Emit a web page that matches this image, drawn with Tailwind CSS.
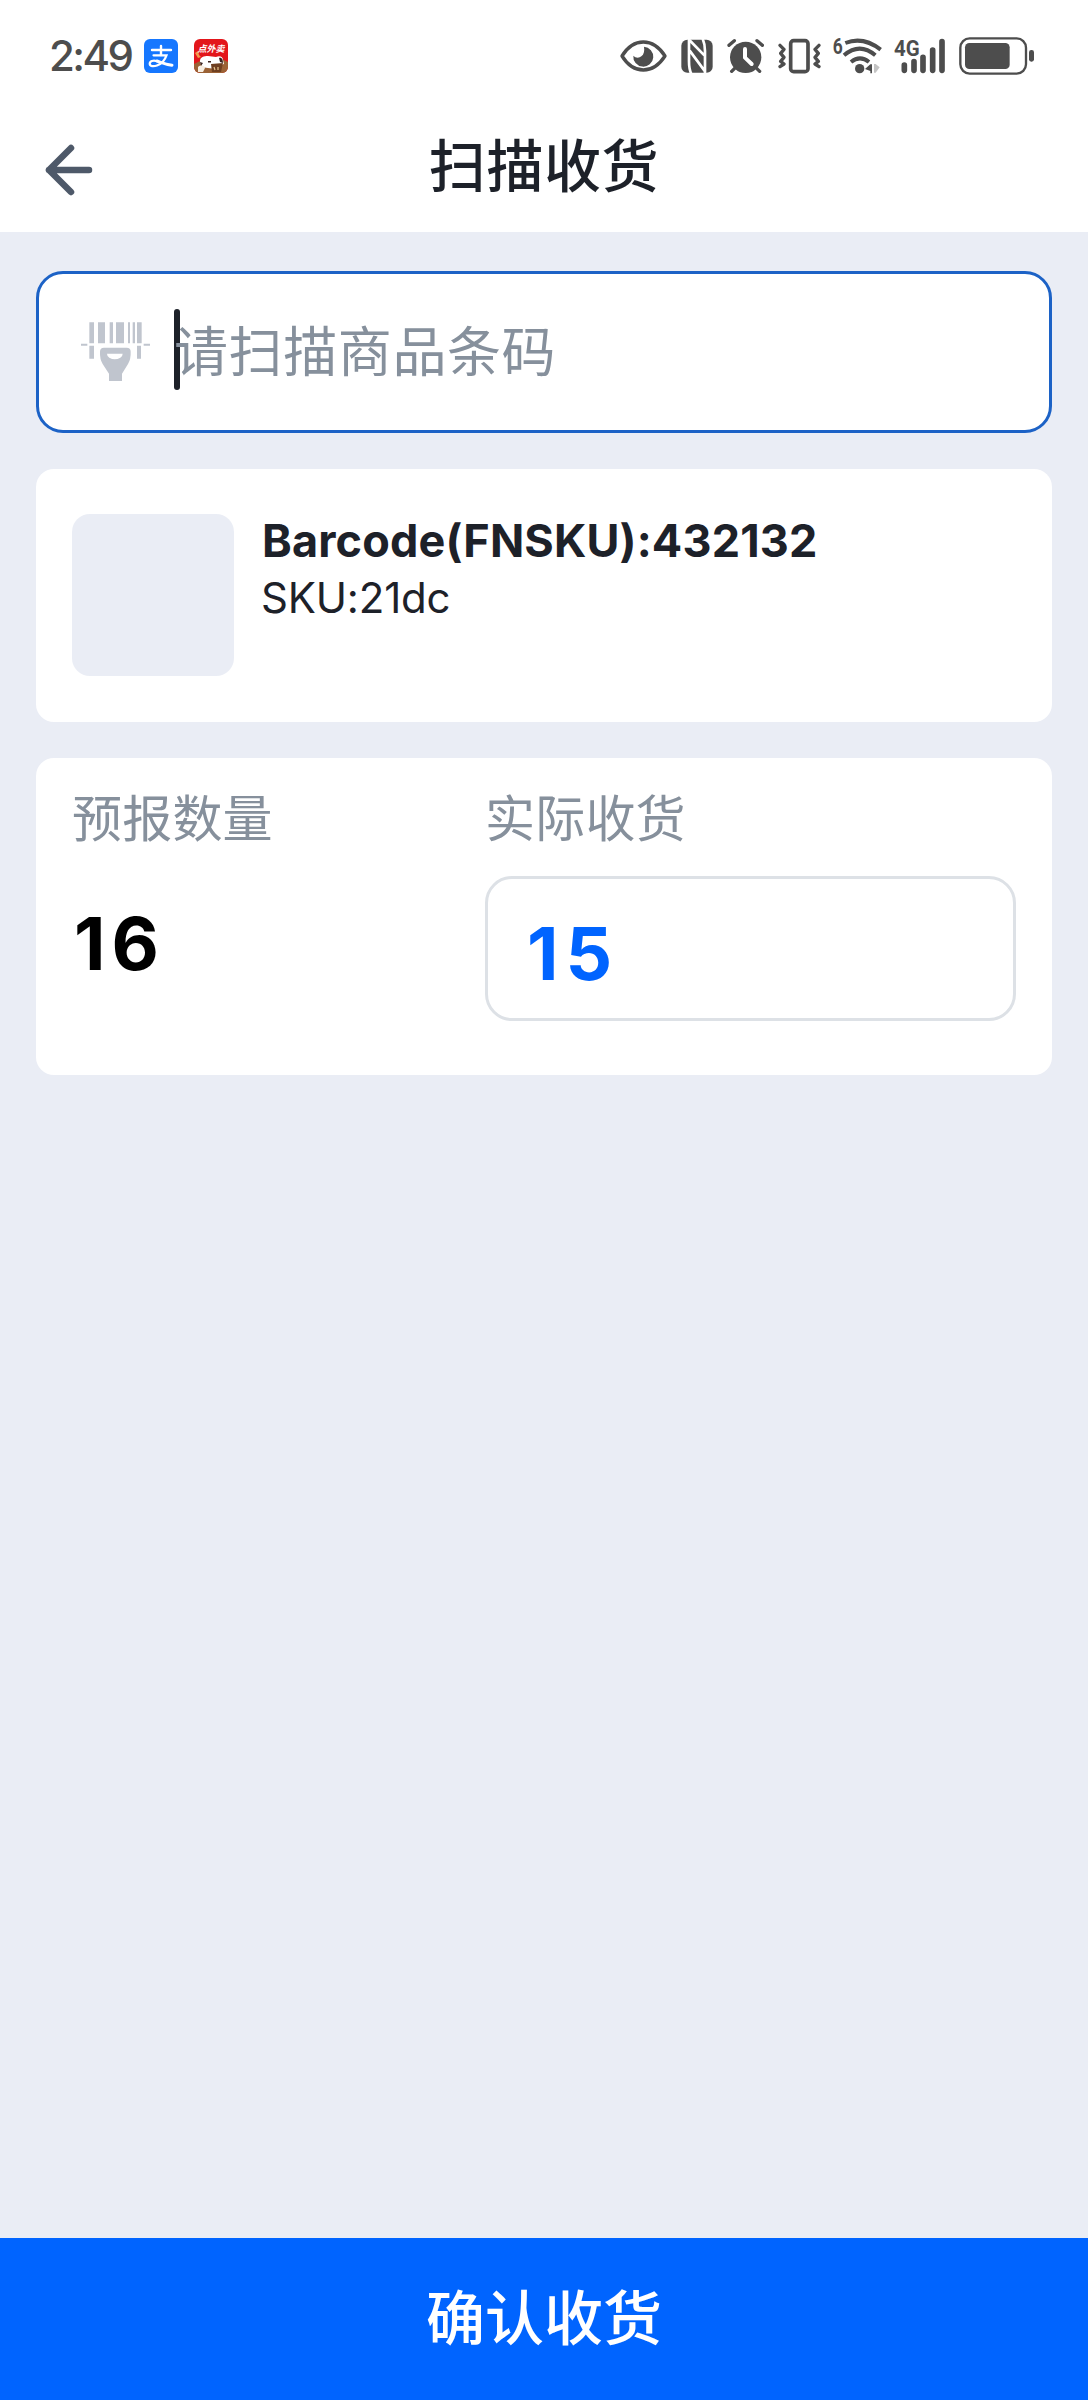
<!DOCTYPE html>
<html lang="zh-CN">
<head>
  <meta charset="UTF-8">
  <meta name="viewport" content="width=device-width, initial-scale=1.0">
  <title>扫描收货</title>
  <script src="https://cdn.jsdelivr.net/npm/@tailwindcss/browser@4"></script>
</head>
<body class="bg-[#eaedf5] text-[#1d2129] font-['Noto_Sans_CJK_SC',sans-serif]">
  <div class="flex flex-col w-[1088px] h-[2400px]">
    <header class="bg-white h-[232px] shrink-0">
      <!-- status bar -->
      <div class="flex justify-between h-[92px] pt-9 pl-[49px] pr-[54px] text-[#4d4d4d]">
        <div class="flex items-center h-10">
          <span class="w-[95px] font-['Inter',sans-serif] font-medium text-[42px] leading-10 tracking-[-2.6px]">2:49</span>
          <svg class="w-[34px] h-[34px]" viewBox="0 0 34 34">
            <rect width="34" height="34" rx="6" fill="#1677ff"/>
            <g fill="none" stroke="#fff" stroke-linecap="round">
              <path d="M8 11h19M17 7v9" stroke-width="2.4"/>
              <path d="M9.500 16.300h13c-1.600 4.700-5 8.500-9.500 10.200-3.400 1.200-7.300 1-7.300-1.800 0-2.700 3.500-3.700 7.200-2.600" stroke-width="2.200"/>
              <path d="M13 22c4 1.300 8 3.400 15 4.200" stroke-width="3"/>
            </g>
          </svg>
          <svg class="w-[34px] h-[34px] ml-4" viewBox="0 0 34 34">
            <defs><clipPath id="app"><rect width="34" height="34" rx="6"/></clipPath></defs>
            <g clip-path="url(#app)">
              <rect width="34" height="34" fill="#e3161b"/>
              <path d="M0 25l6-3 22-2 6 3v11H0z" fill="#9b6235"/>
              <path d="M1 14l3-2 1 4 2 2-3 1z" fill="#f19a4a"/>
              <path d="M6 22c0-4 4-5 8-5l8 1c4-2 7 0 7 3l1 4-3 1-5 4-8-1c-5 0-8-3-8-7z" fill="#fff"/>
              <path d="M25 19c3-1 4 2 4 5l-3-1zM6 23l3 1-2 3zM14 22l3 0v1.500h-3z" fill="#3b2420"/>
              <path d="M17 25l12-1-2 9h-9z" fill="#6f3f20"/>
              <path d="M4 28c3-3 7-1 7 1l-2 4H4z" fill="#f7eee2"/>
              <path d="M20 28l1 3M24 28v3" stroke="#e7c48c" stroke-width="1.200"/>
            </g>
            <text x="17" y="13" text-anchor="middle" font-size="9" font-weight="700" font-style="italic" fill="#fff">点外卖</text>
          </svg>
        </div>
        <div class="flex h-10">
          <!-- eye -->
          <svg class="w-[47px] h-10" viewBox="60 48 141 120">
            <path d="M66 108Q92 66 130 66T195 108Q168 150 130 150T66 108Z" fill="none" stroke="currentColor" stroke-width="10" stroke-linejoin="round"/>
            <path d="M132 80a30 30 0 1 1-32 27c6 7 17 8 24 2 8-6 10-17 8-29z" fill="currentColor"/>
          </svg>
          <!-- nfc -->
          <svg class="w-8 h-10 ml-3.5" viewBox="243 48 96 120">
            <rect x="244" y="59" width="94" height="99" rx="18" fill="currentColor"/>
            <path d="M267 56V124Q267 148 274 162M268 60L313 106M269 92L315 154M315 161V93Q315 72 308 56" fill="none" stroke="#fff" stroke-width="8"/>
          </svg>
          <!-- alarm -->
          <svg class="w-[37px] h-10 ml-3.5" viewBox="381 48 111 120">
            <circle cx="437" cy="112" r="47" fill="currentColor"/>
            <path d="M387 76l16-14M487 76l-16-14M404 145l-9 9M470 145l9 9" stroke="currentColor" stroke-width="10" stroke-linecap="round"/>
            <path d="M435 87v26l20 19" fill="none" stroke="#fff" stroke-width="12" stroke-linecap="round" stroke-linejoin="round"/>
          </svg>
          <!-- vibrate -->
          <svg class="w-[43px] h-10 ml-3.5" viewBox="534 48 129 120">
            <rect x="572" y="62" width="52" height="93" rx="9" fill="none" stroke="currentColor" stroke-width="11"/>
            <path d="M540 76l12 12-10 12 10 12-10 12 10 8-12 8M657 76l-12 12 10 12-10 12 10 12-10 8 12 8" fill="none" stroke="currentColor" stroke-width="10" stroke-linecap="round" stroke-linejoin="round"/>
          </svg>
          <!-- wifi -->
          <svg class="w-[50px] h-10 ml-[11px] overflow-visible" viewBox="36 48 150 120">
            <text x="38" y="101" font-family="Roboto" font-size="66" font-weight="700" textLength="30" lengthAdjust="spacingAndGlyphs" fill="currentColor">6</text>
            <g fill="none" stroke="currentColor" stroke-width="12">
              <path d="M76 69Q130 48 182 89M72 106Q119 66 166 106M93 126Q120 104 147 126"/>
            </g>
            <circle cx="119" cy="146" r="14" fill="currentColor"/>
            <path d="M135 147l16-14h5v27h-5v-7z" fill="currentColor"/>
            <path d="M162 132h5l12 10-12 16h-5z" fill="#c4c4c4"/>
          </svg>
          <!-- signal -->
          <svg class="w-[51px] h-10 ml-3 overflow-visible" viewBox="222 48 153 120">
            <text x="222" y="107" font-family="Roboto" font-size="66" font-weight="700" textLength="77" lengthAdjust="spacingAndGlyphs" fill="currentColor">4G</text>
            <path d="M253 135v16M282 125v26M309 112v39M338 90v61M366 65v86" stroke="currentColor" stroke-width="17" stroke-linecap="round"/>
          </svg>
          <!-- battery -->
          <svg class="w-[75px] h-10 ml-3.5" viewBox="417 48 225 120">
            <rect x="421" y="55" width="197" height="106" rx="28" fill="none" stroke="currentColor" stroke-width="7"/>
            <rect x="435" y="69" width="134" height="78" rx="13" fill="currentColor"/>
            <rect x="627" y="90" width="15" height="35" rx="7" fill="currentColor"/>
          </svg>
        </div>
      </div>
      <!-- title bar -->
      <div class="grid grid-cols-[100px_1fr_100px] items-center h-[140px]">
        <svg class="w-[50px] h-[54px] ml-[44px] mt-4" viewBox="0 0 50 54" fill="none" stroke="#4e5969" stroke-width="6.500" stroke-linecap="round" stroke-linejoin="round">
          <path d="M27 5L5 27l22 22M5 27h40"/>
        </svg>
        <h1 class="text-center text-[57px] leading-[140px] tracking-[0.6px] font-medium">扫描收货</h1>
      </div>
    </header>

    <main class="flex flex-col gap-9 px-9 pt-[39px] grow">
      <!-- barcode input -->
      <div class="flex items-center h-[162px] pl-[42px] bg-white border-3 border-[#1c62c6] rounded-[27px]">
        <svg class="w-[70px] h-[60px]" viewBox="183 187 210 180" fill="#c0c5ce">
          <path d="M208 188h14v63h-14zM234 188h21v63h-21zM269 188h10v63h-10zM288 188h24v63h-24zM324 188h6v63h-6zM338 188h7v63h-7zM351 188h14v63h-14z"/>
          <path d="M183 252h19v6h-19zM371 252h19v6h-19zM208 258h14v39h-14zM351 258h12v39h-12z"/>
          <path fill-rule="evenodd" d="M252 264h68q12 0 12 12 1 22-8 37l-18 29v22h-39v-22l-19-29q-9-15-8-37 0-12 12-12zM261 282q0 8 7 12 16 10 33 0 7-4 7-12z"/>
        </svg>
        <span class="w-1.5 h-[81px] ml-[23px] -mt-[5px] rounded-full bg-[#1d2129]"></span>
        <span class="-ml-[6px] -mt-[6px] text-[54px] leading-[80px] tracking-[0.6px] text-[#86909c]">请扫描商品条码</span>
      </div>

      <!-- product -->
      <section class="flex h-[253px] pl-9 pt-[45px] bg-white rounded-[18px]">
        <div class="w-[162px] h-[162px] rounded-[18px] bg-[#eaedf5]"></div>
        <div class="flex flex-col ml-[28px] font-['Inter',sans-serif]">
          <p class="mt-px text-[45px] leading-[52px] tracking-[0.15px] font-bold">Barcode(FNSKU):432132</p>
          <p class="mt-[5px] -ml-px text-[42px] leading-[52px] tracking-[-0.2px] font-normal">SKU:21dc</p>
        </div>
      </section>

      <!-- quantity -->
      <section class="grid grid-cols-[413px_1fr] h-[317px] px-9 pt-[22px] bg-white rounded-[18px]">
        <div>
          <p class="text-[50px] leading-[70px] tracking-[0.2px] text-[#86909c]">预报数量</p>
          <p class="mt-[57px] pl-[2px] font-['Inter',sans-serif] text-[73px] leading-[73px] tracking-[6px] font-bold text-black">16</p>
        </div>
        <div>
          <p class="text-[50px] leading-[70px] tracking-[0.2px] text-[#86909c]">实际收货</p>
          <div class="flex items-center h-[145px] mt-[26px] pl-[39px] pt-[10px] bg-white border-3 border-[#dde1e6] rounded-[27px]">
            <span class="font-['Inter',sans-serif] text-[73px] leading-[73px] tracking-[7px] font-bold text-[#0064ff]">15</span>
          </div>
        </div>
      </section>
    </main>

    <button class="h-[162px] pb-2 shrink-0 bg-[#0064ff] text-white text-[59px] leading-[80px] font-medium">确认收货</button>
  </div>
</body>
</html>
